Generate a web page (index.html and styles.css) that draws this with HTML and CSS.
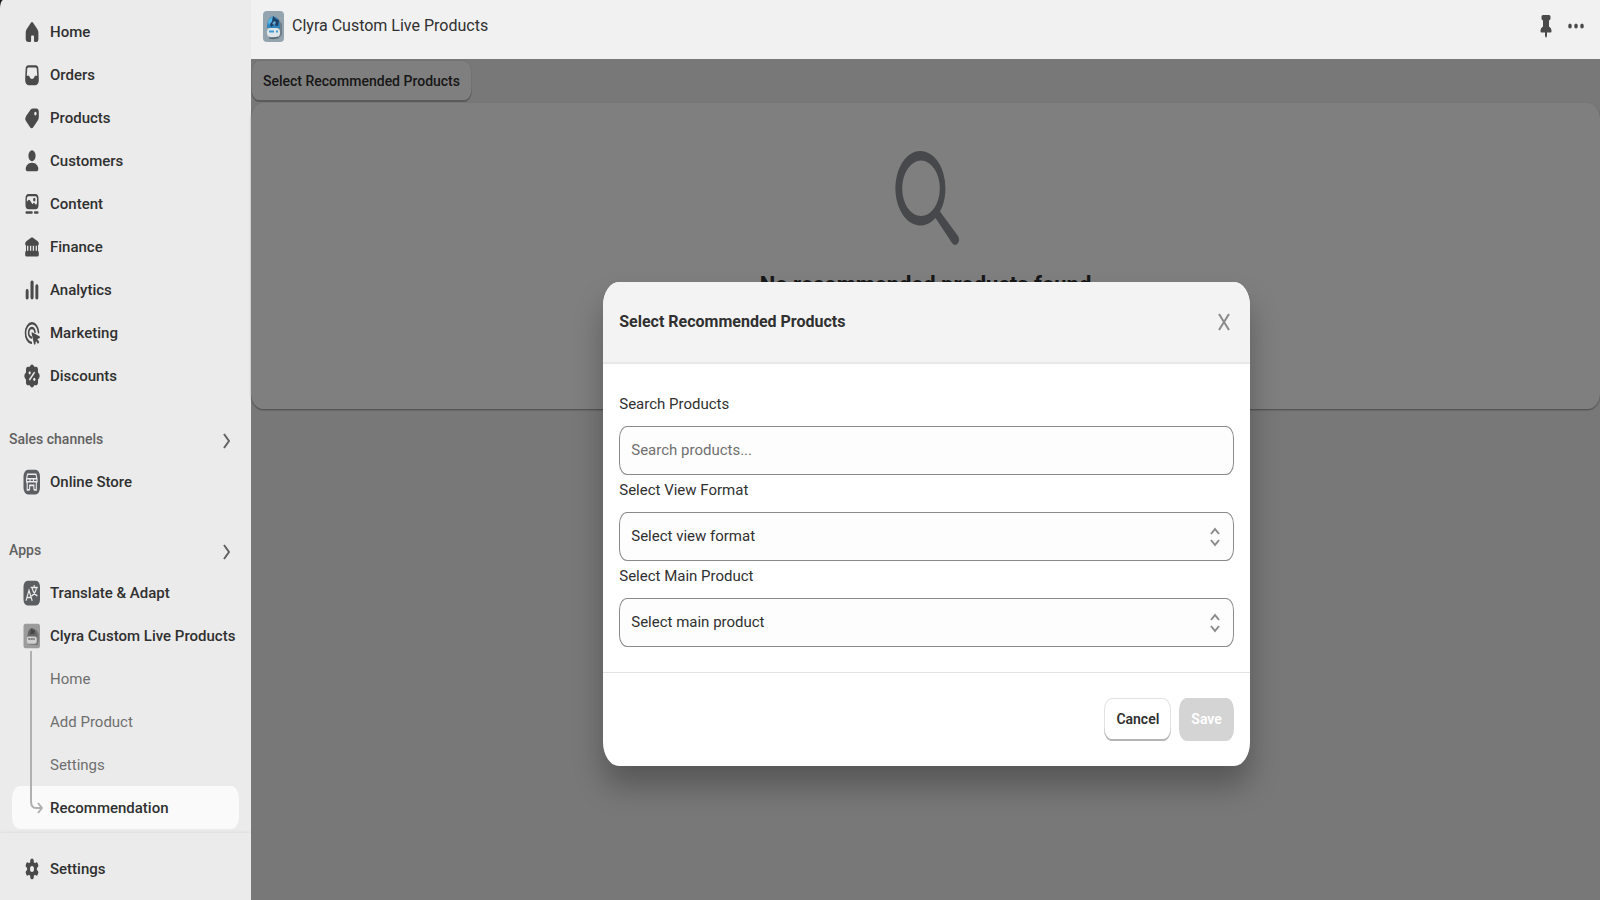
FILE: index.html
```html
<!DOCTYPE html>
<html lang="en">

<head>
  <meta charset="UTF-8">
  <meta name="viewport" content="width=device-width, initial-scale=1.0">
  <title>Clyra Custom Live Products</title>
  <link rel="stylesheet" href="styles.css">
</head>

<body>
  <div class="layout">
    <aside class="sidebar">
      <nav class="nav">
        <a class="nav-item" href="#">
          <svg class="icon" viewBox="0 0 20 20" preserveAspectRatio="none"><path d="M8.6 4.1a2 2 0 0 1 2.8 0l4 4c.7.7 1 1.500 1 2.400v4.200c0 1.200-.8 2-1.900 2h-1.300c-.7 0-1.200-.4-1.200-1.100v-2.400c0-.6-.4-.9-.9-.9h-1c-.6 0-1 .3-1 .9v2.400c0 .7-.5 1.100-1.200 1.100H6.600c-1.700 0-2.900-.8-2.900-2v-4.200c0-.9.2-1.700.9-2.400z"/></svg>
          Home
        </a>
        <a class="nav-item" href="#">
          <svg class="icon" viewBox="0 0 20 20" preserveAspectRatio="none"><path fill-rule="evenodd" d="M6.300 3.500h7.400a2.700 2.700 0 0 1 2.700 2.500l.4 6v1.500a3.300 3.300 0 0 1-3.300 3.300h-7a3.300 3.300 0 0 1-3.300-3.300V12l.4-6a2.700 2.700 0 0 1 2.700-2.500zM6.400 5c-.7 0-1.200.5-1.200 1.100L4.800 10.500h1.800c.6 0 .8.300 1 .7.400 1 1.200 1.400 2.400 1.400s2-.4 2.400-1.400c.2-.4.4-.7 1-.7h1.800l-.4-4.400c0-.6-.5-1.100-1.200-1.100z"/></svg>
          Orders
        </a>
        <a class="nav-item" href="#">
          <svg class="icon" viewBox="0 0 20 20" preserveAspectRatio="none"><path fill-rule="evenodd" d="M11 3.600h3.300a2.500 2.500 0 0 1 2.500 2.500v3.300c0 .8-.3 1.500-.9 2.100l-4.500 4.500a2.500 2.500 0 0 1-3.500 0l-3.800-3.800a2.500 2.500 0 0 1 0-3.500l4.600-4.300c.6-.5 1.400-.8 2.300-.8zM13.400 8.300a1.200 1.200 0 1 0 0-2.400 1.200 1.200 0 0 0 0 2.400z"/></svg>
          Products
        </a>
        <a class="nav-item" href="#">
          <svg class="icon" viewBox="0 0 20 20" preserveAspectRatio="none"><ellipse cx="10" cy="6.500" rx="3.600" ry="3.600"/><path d="M10 11.200c3.700 0 6.300 2 6.300 4.200 0 .8-.5 1.400-1.400 1.400H5.100c-.9 0-1.400-.6-1.400-1.400 0-2.200 2.600-4.200 6.300-4.200z"/></svg>
          Customers
        </a>
        <a class="nav-item" href="#">
          <svg class="icon" viewBox="0 0 20 20" preserveAspectRatio="none"><path fill-rule="evenodd" d="M6.500 3.400h7a3 3 0 0 1 3 3v4.100a3 3 0 0 1-3 3h-7a3 3 0 0 1-3-3V6.400a3 3 0 0 1 3-3zM6.600 4.800a1.700 1.700 0 0 0-1.700 1.600v2.100l1.500-1.100c.5-.4 1.100-.3 1.500.1l2.500 2.700.9-.7c.5-.4 1.100-.3 1.500.1l1 .9c.7-.2 1.200-.8 1.200-1.500V6.400c0-.9-.7-1.600-1.600-1.600zM12.300 8.300a1.200 1.200 0 1 0 0-2.400 1.200 1.200 0 0 0 0 2.400z"/><rect x="3.500" y="14.900" width="7.200" height="1.600" rx=".8"/><rect x="12" y="14.900" width="4.500" height="1.600" rx=".8"/></svg>
          Content
        </a>
        <a class="nav-item" href="#">
          <svg class="icon" viewBox="0 0 20 20" preserveAspectRatio="none"><path d="M9 3.800a2 2 0 0 1 2 0l4.700 2.300c.7.400 1.100.9 1.100 1.600 0 .9-.6 1.400-1.400 1.400H16v3.500c.5.200.8.600.8 1.300v1.300c0 .7-.4 1.100-1.100 1.100H4.300c-.7 0-1.100-.4-1.100-1.100v-1.300c0-.7.300-1.100.8-1.300V9.100c-.5-.2-.8-.5-.8-1.400 0-.7.4-1.200 1.100-1.600z"/><path class="cut" d="M5.700 9.200v3.300M8.600 9.200v3.300M11.400 9.200v3.300M14.300 9.200v3.300"/></svg>
          Finance
        </a>
        <a class="nav-item" href="#">
          <svg class="icon" viewBox="0 0 20 20" preserveAspectRatio="none"><rect x="3.700" y="9.300" width="2.900" height="7" rx="1.300"/><rect x="8.500" y="3.600" width="3.100" height="12.700" rx="1.400"/><rect x="13.400" y="6.200" width="2.900" height="10.100" rx="1.300"/></svg>
          Analytics
        </a>
        <a class="nav-item" href="#">
          <svg class="icon" viewBox="0 0 20 20" preserveAspectRatio="none"><path class="line" d="M9.300 16.500A6.500 6.500 0 1 1 16.500 9.500M9.300 13A3.200 3.200 0 1 1 13 9.300"/><path d="M9.600 10.400c-.2-.6.300-1 .8-.8l7 2.500c.7.300.6 1.200-.1 1.400l-2 .5 2 2-1.300 1.300-2-2-.6 2c-.2.700-1.100.7-1.400 0z"/></svg>
          Marketing
        </a>
        <a class="nav-item" href="#">
          <svg class="icon" viewBox="0 0 20 20" preserveAspectRatio="none"><path d="M8.300 3.200c.9-1.100 2.500-1.100 3.400 0l.5.700h1.900c1.100 0 1.900.8 1.900 1.900v1.900l.9.700c1 .9 1 2.400 0 3.300l-.9.700v1.900c0 1.100-.8 1.900-1.900 1.900h-1.900l-.5.700c-.9 1.100-2.500 1.100-3.400 0l-.5-.7H5.900c-1.100 0-1.900-.8-1.900-1.900v-1.900l-.9-.7c-1-.9-1-2.400 0-3.300L4 7.700V5.800c0-1.100.8-1.900 1.900-1.900h1.900z"/><path class="cut" d="M12.600 7.400l-5.200 5.300"/><circle class="hole" cx="7.700" cy="7.900" r="1.100"/><circle class="hole" cx="12.300" cy="12.200" r="1.100"/></svg>
          Discounts
        </a>

        <a class="nav-heading channels" href="#">
          Sales channels
          <svg class="chevron" viewBox="0 0 7 16"><path d="M1 1l5 7-5 7"/></svg>
        </a>
        <a class="nav-item" href="#">
          <svg class="icon" viewBox="0 0 20 20" preserveAspectRatio="none"><rect class="tile" x="1.500" y="1.800" width="16.500" height="16.500" rx="4.500"/><path class="glyph" d="M5.500 4.800h8.500l1 3.300v1.700H4.500V8.100zM4.500 7.800H15M5.200 10v5.200h2.400M14.300 10v5.200h-2.400M7.600 15.200v-3h4.300v3"/><path class="glyph" d="M8 8v2M11.500 8v2"/></svg>
          Online Store
        </a>

        <a class="nav-heading apps" href="#">
          Apps
          <svg class="chevron" viewBox="0 0 7 16"><path d="M1 1l5 7-5 7"/></svg>
        </a>
        <a class="nav-item" href="#">
          <svg class="icon" viewBox="0 0 20 20" preserveAspectRatio="none"><rect class="tile" x="1.500" y="1.800" width="16.500" height="16.500" rx="4"/><path class="glyph" d="M4 15.200L7 8.200l3.200 7M5.200 13h3.900M8.800 6.300h7M12.200 4.600v1.700M10 6.500c1 2.700 2.700 4.500 5.300 5.400M14.500 6.500c-.8 2.700-2.500 4.500-5 5.500"/></svg>
          Translate &amp; Adapt
        </a>
        <a class="nav-item" href="#">
          <svg class="icon" viewBox="0 0 20 20" preserveAspectRatio="none"><rect x="1.500" y="1.800" width="16.500" height="16.300" rx="2" fill="#9b9b9b"/><path d="M6 15.500l9.500.6 1.300-3V8.500L14 5.500z" fill="#777"/><path d="M5.500 10.500C5.500 6.500 7.500 4.800 10 4.800s5 1.700 5 5.700z" fill="#666"/><path d="M9.500 4.800l2 1.700 1.500-.7-1 3-2-.5-2 .9z" fill="#444"/><rect x="4.800" y="10.300" width="10" height="4.800" rx="2" fill="#d0d0d0"/><path d="M6.300 12h6.500" stroke="#808080" stroke-width="1.200" stroke-dasharray="2 .5"/></svg>
          Clyra Custom Live Products
        </a>
        <div class="subnav">
          <a class="nav-item" href="#">Home</a>
          <a class="nav-item" href="#">Add Product</a>
          <a class="nav-item" href="#">Settings</a>
          <a class="nav-item active" href="#">Recommendation</a>
          <svg class="branch" viewBox="0 0 14 166"><path d="M2 0v150q0 7 5 7h5M9 152l4 5-4 5"/></svg>
        </div>
      </nav>
      <div class="sidebar-footer">
        <a class="nav-item" href="#">
          <svg class="icon" viewBox="0 0 20 20" preserveAspectRatio="none"><path fill-rule="evenodd" d="M8.300 4.300c.1-.7.600-1.100 1.200-1.100h1c.6 0 1.100.4 1.200 1.100l.2 1.200 1 .6 1.200-.5c.6-.2 1.200 0 1.500.5l.6 1c.3.500.2 1.100-.3 1.500l-1 .8v1.200l1 .8c.5.400.6 1 .3 1.500l-.6 1c-.3.500-.9.700-1.500.5l-1.200-.5-1 .6-.2 1.200c-.1.700-.6 1.100-1.200 1.100h-1c-.6 0-1.100-.4-1.200-1.100l-.2-1.200-1-.6-1.200.5c-.6.200-1.200 0-1.500-.5l-.6-1c-.3-.5-.2-1.100.3-1.500l1-.8V9.400l-1-.8c-.5-.4-.6-1-.3-1.500l.6-1c.3-.5.9-.7 1.500-.5l1.200.5 1-.6zM10 12a2 2 0 1 0 0-4 2 2 0 0 0 0 4z"/></svg>
          Settings
        </a>
      </div>
    </aside>

    <main class="main">
      <header class="app-bar">
        <svg class="app-logo" viewBox="0 0 21 31">
          <rect width="21" height="31" rx="4" fill="#93a4ae"/>
          <path d="M6 26l9 2 4-4V13l-4-5z" fill="#71818b"/>
          <path d="M4 17C4 9 7 5.500 10.500 5.500S17 9 17 17z" fill="#2f86bd"/>
          <path d="M5 11q1-4 5-5l-1 4-3 4z" fill="#55b8e8"/>
          <path d="M10 5l3 3 3 1-1 6-4-1-3 2-1-3 2-2z" fill="#1d3f68"/>
          <path d="M11 10l2 1-1 3-3-1z" fill="#67a7cf"/>
          <rect x="4" y="17" width="13" height="9" rx="4" fill="#dfe6e9"/>
          <path d="M6 20.500h5M13 20.500h2" stroke="#3d9bd2" stroke-width="2"/>
          <path d="M6 27q5 2 9-1" stroke="#4e5f69" fill="none"/>
        </svg>
        <h1 class="app-title">Clyra Custom Live Products</h1>
        <button class="bar-button" aria-label="Pin app">
          <svg width="12" height="23" viewBox="0 0 12 23"><path d="M3 0h6q1.500 0 1.500 1.500v2Q10.500 5 9 5.500v6q2.500 1.500 2.500 4v1q0 1-1 1H7v3.500l-1 2-1-2v-3.500H1.500q-1 0-1-1v-1q0-2.500 2.500-4v-6Q1.500 5 1.500 3.500v-2Q1.500 0 3 0z"/></svg>
        </button>
        <button class="bar-button" aria-label="More actions">
          <svg width="16" height="6" viewBox="0 0 16 6"><ellipse cx="2" cy="3" rx="1.800" ry="2.600"/><ellipse cx="8" cy="3" rx="1.800" ry="2.600"/><ellipse cx="14" cy="3" rx="1.800" ry="2.600"/></svg>
        </button>
      </header>

      <div class="page">
        <button class="page-button">Select Recommended Products</button>
        <section class="card">
          <svg class="search-icon" viewBox="0 0 66 94"><path fill-rule="evenodd" d="M28 0a25 37.300 0 0 1 19 60.500L65 85c1.500 3 1.500 5 0 7-1.500 2.500-4 2.500-6 0L42.500 67A25 37.300 0 1 1 28 0zM28 9.600a18.800 27.700 0 1 0 0 55.400 18.800 27.700 0 0 0 0-55.400z"/></svg>
          <h2 class="card-title">No recommended products found</h2>
        </section>

        <div class="backdrop">
          <div class="modal" role="dialog" aria-labelledby="modal-title">
            <header class="modal-header">
              <h2 class="modal-title" id="modal-title">Select Recommended Products</h2>
              <button class="close" aria-label="Close">
                <svg width="12" height="18" viewBox="0 0 12 18"><path d="M1 1l10 16M11 1L1 17"/></svg>
              </button>
            </header>
            <form class="modal-body">
              <label for="search">Search Products</label>
              <input class="field" id="search" type="text" placeholder="Search products...">
              <label for="format">Select View Format</label>
              <div class="select">
                <select class="field" id="format">
                  <option>Select view format</option>
                </select>
                <svg class="arrows" viewBox="0 0 10 20"><path d="M1 7l4-5 4 5M1 13l4 5 4-5"/></svg>
              </div>
              <label for="product">Select Main Product</label>
              <div class="select">
                <select class="field" id="product">
                  <option>Select main product</option>
                </select>
                <svg class="arrows" viewBox="0 0 10 20"><path d="M1 7l4-5 4 5M1 13l4 5 4-5"/></svg>
              </div>
            </form>
            <footer class="modal-footer">
              <button class="button">Cancel</button>
              <button class="button primary" disabled>Save</button>
            </footer>
          </div>
        </div>
      </div>
    </main>
  </div>
</body>

</html>
```

FILE: styles.css
```css
* {
  box-sizing: border-box;
}

body {
  margin: 0;
  background: #1a1a1a;
  color: #303030;
  font-family: Roboto, sans-serif;
  font-size: 15px;
  line-height: 24px;
}

h1,
h2 {
  margin: 0;
}

a {
  color: inherit;
  text-decoration: none;
}

button,
input,
select {
  font: inherit;
  color: inherit;
}

.layout {
  display: flex;
  min-height: 100vh;
  background: #ebebeb;
  border-top-left-radius: 3px 9px;
  overflow: hidden;
}

/* sidebar */
.sidebar {
  width: 251px;
  flex-shrink: 0;
  display: flex;
  flex-direction: column;
  justify-content: space-between;
}

.nav {
  padding: 10px 12px 0;
}

.nav-item {
  display: flex;
  align-items: center;
  gap: 8px;
  height: 43px;
  padding-left: 10px;
  border-radius: 8px / 12px;
  font-weight: 500;
  white-space: nowrap;
}

.icon {
  width: 20px;
  height: 30px;
  flex-shrink: 0;
  fill: #4a4a4a;
}

.icon .line {
  fill: none;
  stroke: #4a4a4a;
  stroke-width: 1.6;
  stroke-linecap: round;
}

.icon .cut {
  fill: none;
  stroke: #ebebeb;
  stroke-width: 1.3;
}

.icon .hole {
  fill: #ebebeb;
}

.icon .tile {
  fill: #5c5f62;
}

.icon .glyph {
  fill: none;
  stroke: #ebebeb;
  stroke-width: 1.1;
}

.nav-heading {
  display: flex;
  align-items: center;
  justify-content: space-between;
  height: 43px;
  margin: 0 -3px;
  padding-right: 12px;
  color: #616161;
  font-size: 14px;
  font-weight: 500;
}

.channels {
  margin-top: 20px;
}

.apps {
  margin-top: 25px;
}

.chevron {
  width: 7px;
  height: 16px;
  margin-top: 4px;
  fill: none;
  stroke: #616161;
  stroke-width: 2;
}

.subnav {
  position: relative;
  color: #6f6f6f;
}

.subnav .nav-item {
  padding-left: 38px;
  font-weight: 400;
}

.subnav .active {
  background: #fafafa;
  color: #303030;
  font-weight: 500;
}

.branch {
  position: absolute;
  top: -6px;
  left: 17px;
  width: 14px;
  height: 166px;
  fill: none;
  stroke: #b0b0b0;
  stroke-width: 2;
}

.sidebar-footer {
  padding: 14px 12px 10px;
  box-shadow: 0 -1px 3px rgba(0, 0, 0, 0.06);
}

/* app frame */
.main {
  flex: 1;
  display: flex;
  flex-direction: column;
}

.app-bar {
  display: flex;
  align-items: center;
  height: 59px;
  padding: 0 16px 7px 12px;
  background: #f1f1f1;
}

.app-logo {
  width: 21px;
  height: 31px;
}

.app-title {
  flex: 1;
  margin-left: 8px;
  font-size: 16px;
  font-weight: 400;
}

.bar-button {
  display: flex;
  margin-left: 16px;
  padding: 0;
  border: none;
  background: none;
  fill: #4a4a4a;
}

.page {
  position: relative;
  flex: 1;
  padding-top: 1px;
  background: #f1f1f1;
}

.page-button {
  display: block;
  height: 42px;
  padding: 0 12px;
  border: none;
  border-radius: 8px / 12px;
  background: #fff;
  box-shadow: inset 0 -2px 0 #b5b5b5, inset 0 0 0 1px #e3e3e3;
  font-size: 14px;
  font-weight: 500;
}

.card {
  display: flex;
  flex-direction: column;
  align-items: center;
  height: 306px;
  margin-top: 1px;
  padding-top: 48px;
  border-radius: 12px / 16px;
  background: #fff;
  box-shadow: 0 1px 2px rgba(0, 0, 0, 0.4);
}

.search-icon {
  width: 66px;
  height: 94px;
  fill: #8c9196;
}

.card-title {
  margin-top: 22px;
  font-size: 22px;
  line-height: 36px;
}

/* modal */
.backdrop {
  position: absolute;
  inset: 0;
  display: flex;
  align-items: center;
  justify-content: center;
  padding: 88px 0 0 2px;
  background: rgba(0, 0, 0, 0.5);
}

.modal {
  width: 48%;
  border-radius: 16px / 24px;
  background: #fff;
  box-shadow: 0 20px 30px rgba(0, 0, 0, 0.28);
  overflow: hidden;
}

.modal-header {
  display: flex;
  align-items: center;
  justify-content: space-between;
  height: 82px;
  padding: 0 20px 0 16px;
  border-bottom: 2px solid #e8e8e8;
  background: #f3f3f3;
}

.modal-title {
  font-size: 16px;
  font-weight: 700;
}

.close {
  display: flex;
  padding: 0;
  border: none;
  background: none;
  fill: none;
  stroke: #8a8a8a;
  stroke-width: 2;
}

.modal-body {
  display: flex;
  flex-direction: column;
  padding: 25px 16px;
}

.modal-body label {
  height: 37px;
  padding: 3px 0;
}

.field {
  width: 100%;
  height: 49px;
  padding: 0 11px;
  border: 1px solid #8a8a8a;
  border-radius: 8px / 12px;
  background: #fdfdfd;
  appearance: none;
}

.field::placeholder {
  color: #707070;
}

.select {
  position: relative;
}

.arrows {
  position: absolute;
  top: 15px;
  right: 14px;
  width: 10px;
  height: 20px;
  fill: none;
  stroke: #8a8a8a;
  stroke-width: 2;
  pointer-events: none;
}

.modal-footer {
  display: flex;
  justify-content: flex-end;
  gap: 8px;
  padding: 25px 16px;
  border-top: 1px solid #e3e3e3;
}

.button {
  height: 43px;
  padding: 0 12px;
  border: none;
  border-radius: 8px / 12px;
  background: #fff;
  box-shadow: inset 0 -2px 0 #b5b5b5, inset 0 0 0 1px #e3e3e3;
  font-size: 14px;
  font-weight: 600;
}

.primary {
  background: #d4d4d4;
  box-shadow: none;
  color: #fff;
}
```
